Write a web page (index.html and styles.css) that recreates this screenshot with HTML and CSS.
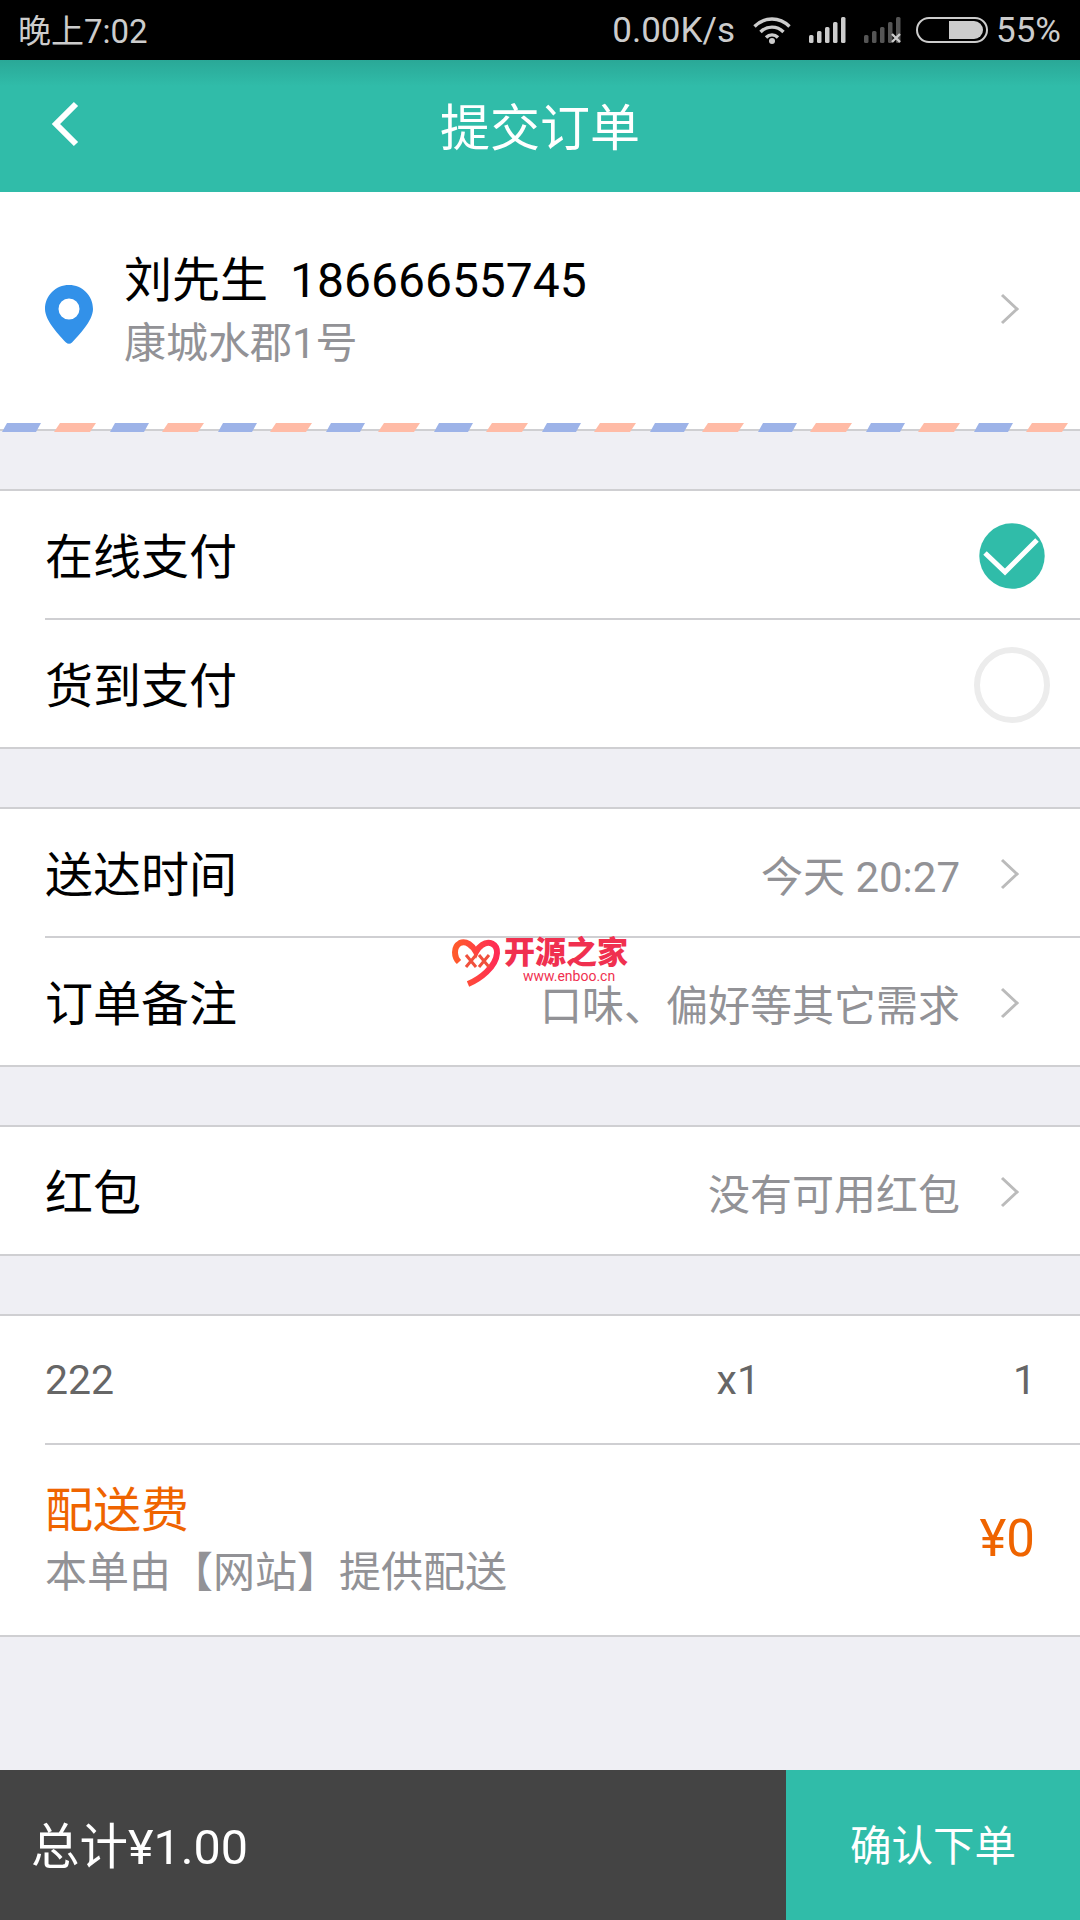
FILE: index.html
```html
<!DOCTYPE html>
<html lang="zh-CN">
<head>
<meta charset="utf-8">
<title>提交订单</title>
<link rel="stylesheet" href="styles.css">
</head>
<body>
<div class="page">
  <div class="status">
    <span class="status-time">晚上7:02</span>
    <div class="status-right">
      <span class="speed">0.00K/s</span>
      <svg class="wifi" width="38" height="27" viewBox="0 0 38 27"><g fill="none" stroke="#ccc" stroke-width="3.4"><path d="M1.5 9.5C11.5 -0.5 26.500 -0.500 36.500 9.500"/><path d="M7.500 15C14 8.500 24 8.500 30.500 15"/><path d="M13 20.500C16.500 17 21.500 17 25 20.500"/></g><circle cx="19" cy="24" r="3" fill="#ccc"/></svg>
      <svg class="sig" width="37" height="26" viewBox="0 0 37 26"><g fill="#ccc"><rect x="0" y="18" width="4.500" height="8" rx="1.500"/><rect x="8" y="14" width="4.500" height="12" rx="1.500"/><rect x="16" y="10" width="4.500" height="16" rx="1.500"/><rect x="24" y="5" width="4.500" height="21" rx="1.500"/><rect x="32" y="0" width="4.500" height="26" rx="1.500"/></g></svg>
      <svg class="sig" width="37" height="26" viewBox="0 0 37 26"><g fill="#555"><rect x="0" y="18" width="4.500" height="8" rx="1.500"/><rect x="8" y="14" width="4.500" height="12" rx="1.500"/><rect x="16" y="10" width="4.500" height="16" rx="1.500"/><rect x="24" y="5" width="4.500" height="21" rx="1.500"/><rect x="32" y="0" width="4.500" height="26" rx="1.500"/></g><path d="M28 17L36 25M36 17L28 25" stroke="#ccc" stroke-width="2.400"/></svg>
      <svg class="batt" width="72" height="26" viewBox="0 0 72 26"><rect x="1" y="1" width="70" height="24" rx="12" fill="none" stroke="#ccc" stroke-width="2"/><path d="M33 4H58a9 9 0 0 1 9 9v0a9 9 0 0 1 -9 9H33Z" fill="#ccc"/></svg>
      <span class="pct">55%</span>
    </div>
  </div>

  <header class="bar">
    <svg class="back" width="30" height="46" viewBox="0 0 30 46"><path d="M26 3L6 23L26 43" fill="none" stroke="#fff" stroke-width="6"/></svg>
    <h1 class="title">提交订单</h1>
  </header>

  <section class="addr">
    <div class="addr-main">
      <svg class="pin" width="48" height="59" viewBox="0 0 48 59"><path fill-rule="evenodd" fill="#3291e9" d="M24 0C37.300 0 48 10.500 48 24C48 36 33 51 27 57.500C25.300 59.300 22.700 59.300 21 57.500C15 51 0 36 0 24C0 10.500 10.700 0 24 0ZM24 13.500A10.500 10.500 0 1 0 24 34.500A10.500 10.500 0 1 0 24 13.500Z"/></svg>
      <div class="addr-text">
        <div class="addr-name"><span>刘先生</span><span>18666655745</span></div>
        <div class="addr-line">康城水郡1号</div>
      </div>
      <svg class="chev" width="20" height="32" viewBox="0 0 20 32"><path d="M2 2L17 16L2 30" fill="none" stroke="#bbb" stroke-width="3"/></svg>
    </div>
    <svg class="stripes" width="1080" height="9" viewBox="0 0 1080 9">
      <defs>
        <pattern id="air" width="108" height="9" patternUnits="userSpaceOnUse">
          <path d="M7 0H41L36 9H2Z" fill="#9db3e8"/>
          <path d="M60 0H96L90 9H54Z" fill="#ffbba6"/>
        </pattern>
      </defs>
      <rect width="1080" height="9" fill="url(#air)"/>
    </svg>
  </section>

  <section class="group">
    <div class="row">
      <span class="label">在线支付</span>
      <svg class="mark" width="66" height="66" viewBox="0 0 66 66"><circle cx="33" cy="33" r="32.700" fill="#30bca9"/><path d="M6 30L26 49L58 17" fill="none" stroke="#fff" stroke-width="5"/></svg>
    </div>
    <div class="row">
      <span class="label">货到支付</span>
      <span class="radio"></span>
    </div>
  </section>

  <section class="group">
    <div class="row">
      <span class="label">送达时间</span>
      <span class="value">今天 20:27</span>
      <svg class="chev" width="20" height="32" viewBox="0 0 20 32"><path d="M2 2L17 16L2 30" fill="none" stroke="#bbb" stroke-width="3"/></svg>
    </div>
    <div class="row">
      <span class="label">订单备注</span>
      <span class="value">口味、偏好等其它需求</span>
      <svg class="chev" width="20" height="32" viewBox="0 0 20 32"><path d="M2 2L17 16L2 30" fill="none" stroke="#bbb" stroke-width="3"/></svg>
    </div>
  </section>

  <section class="group">
    <div class="row">
      <span class="label">红包</span>
      <span class="value">没有可用红包</span>
      <svg class="chev" width="20" height="32" viewBox="0 0 20 32"><path d="M2 2L17 16L2 30" fill="none" stroke="#bbb" stroke-width="3"/></svg>
    </div>
  </section>

  <section class="group">
    <div class="row item">
      <span class="item-name">222</span>
      <span class="item-qty">x1</span>
      <span class="item-price">1</span>
    </div>
    <div class="row fee">
      <div class="fee-text">
        <div class="fee-title">配送费</div>
        <div class="fee-note">本单由<span class="tc">【</span>网站<span class="tc">】</span>提供配送</div>
      </div>
      <span class="fee-price">¥0</span>
    </div>
  </section>

  <div class="spacer"></div>

  <footer class="foot">
    <div class="total">总计¥1.00</div>
    <div class="confirm">确认下单</div>
  </footer>

  <div class="mark-logo">
    <svg class="heart" width="50" height="52" viewBox="0 0 50 52">
      <defs><linearGradient id="hg" x1="0" x2="1" y1="0" y2="0"><stop offset="0" stop-color="#ff5a2c"/><stop offset="1" stop-color="#ff2b55"/></linearGradient></defs>
      <path d="M16 47C28 42 44 30 45 16C45.500 7 37 3 30 8C27 10 25 13 24 15C21 9 14 3 8 6C1 10 2 20 7 25" fill="none" stroke="url(#hg)" stroke-width="6"/>
      <path d="M14 18L24 30M24 18L14 30M27 18L37 30M37 18L27 30" stroke="#f0503c" stroke-width="3"/>
    </svg>
    <div class="logo-text">
      <div class="logo-cn">开源之家</div>
      <div class="logo-url">www.enboo.cn</div>
    </div>
  </div>
</div>
</body>
</html>
```

FILE: styles.css
```css
* { box-sizing: border-box; margin: 0; padding: 0; }
html, body { width: 1080px; height: 1920px; overflow: hidden; }
body { font-family: Roboto, "Noto Sans CJK SC", sans-serif; background: #efeff4; color: #000; }
.page { position: relative; display: flex; flex-direction: column; width: 1080px; height: 1920px; }

.status { display: flex; align-items: center; justify-content: space-between; height: 60px; flex: none; padding: 0 19px 0 18px; background: #000; color: #ccc; font-size: 35px; }
.status-time { font-size: 33px; padding-bottom: 3px; }
.status-right { display: flex; align-items: center; }
.speed { margin-right: 18px; }
.wifi { margin-right: 18px; }
.sig { margin-right: 18px; }
.sig + .batt { margin-left: -3px; }
.pct { margin-left: 8px; }

.bar { position: relative; display: flex; align-items: center; justify-content: center; height: 132px; flex: none; background: linear-gradient(#2aa897 0, #30bca9 26px); color: #fff; }
.back { position: absolute; left: 50px; top: 41px; }
.title { font-size: 50px; font-weight: 400; padding-bottom: 5px; }

.addr { display: flex; flex-direction: column; height: 239px; flex: none; background: #fff; border-bottom: 2px solid #cfcfd2; }
.addr-main { display: flex; align-items: center; height: 231px; flex: none; padding: 0 45px; }
.pin { flex: none; margin-top: 14px; }
.addr-text { flex: 1; margin-left: 31px; padding-top: 8px; }
.addr-name { display: flex; gap: 22px; font-size: 48px; line-height: 64px; }
.addr-line { font-size: 42px; line-height: 62px; color: #929296; }
.addr-main .chev { margin-right: 15px; }
.stripes { display: block; flex: none; }

.group { flex: none; margin-top: 58px; background: #fff; border-top: 2px solid #cfcfd2; border-bottom: 2px solid #cfcfd2; padding-left: 45px; }
.row { display: flex; align-items: center; height: 129px; padding-right: 60px; border-bottom: 2px solid #cfcfd2; }
.row:last-child { height: 127px; border-bottom: 0; }
.label { flex: 1; font-size: 48px; padding-bottom: 4px; }
.value { font-size: 42px; color: #929296; margin-right: 40px; margin-top: 2px; }
.chev { flex: none; margin-top: 3px; }
.mark { flex: none; margin-right: -25px; margin-top: 3px; }
.radio { flex: none; width: 76px; height: 76px; margin-right: -30px; margin-top: 3px; border: 6.500px solid #ececec; border-radius: 50%; }

.item { padding-right: 44px; }
.item-name { flex: 1; font-size: 41px; color: #666; }
.item-qty { font-size: 41px; color: #666; margin-right: 253px; }
.item-price { font-size: 41px; color: #666; }

.row.fee { height: 190px; padding-right: 45px; }
.fee-text { flex: 1; padding-top: 1px; }
.fee-title { font-size: 48px; line-height: 60px; color: #ef6400; }
.fee-note { font-size: 42px; line-height: 55px; color: #929296; }
.tc { font-family: "Noto Sans CJK TC", sans-serif; font-weight: 400; }
.fee-price { font-size: 51px; padding-bottom: 3px; color: #ef6400; }

.spacer { flex: 1; }

.foot { display: flex; height: 150px; flex: none; }
.total { flex: 1; display: flex; align-items: center; padding: 0 0 4px 31px; background: #444; color: #fff; font-size: 48.500px; }
.confirm { display: flex; align-items: center; justify-content: center; width: 294px; padding-bottom: 4px; background: #30bca9; color: #fff; font-size: 41.500px; }

.mark-logo { position: absolute; left: 452px; top: 937px; display: flex; }
.heart { flex: none; }
.logo-text { margin-left: 2px; }
.logo-cn { font-size: 31px; line-height: 32px; font-weight: 900; color: #f0304f; white-space: nowrap; }
.logo-url { padding-left: 19px; font-size: 14px; line-height: 14px; color: #f0304f; }
```
